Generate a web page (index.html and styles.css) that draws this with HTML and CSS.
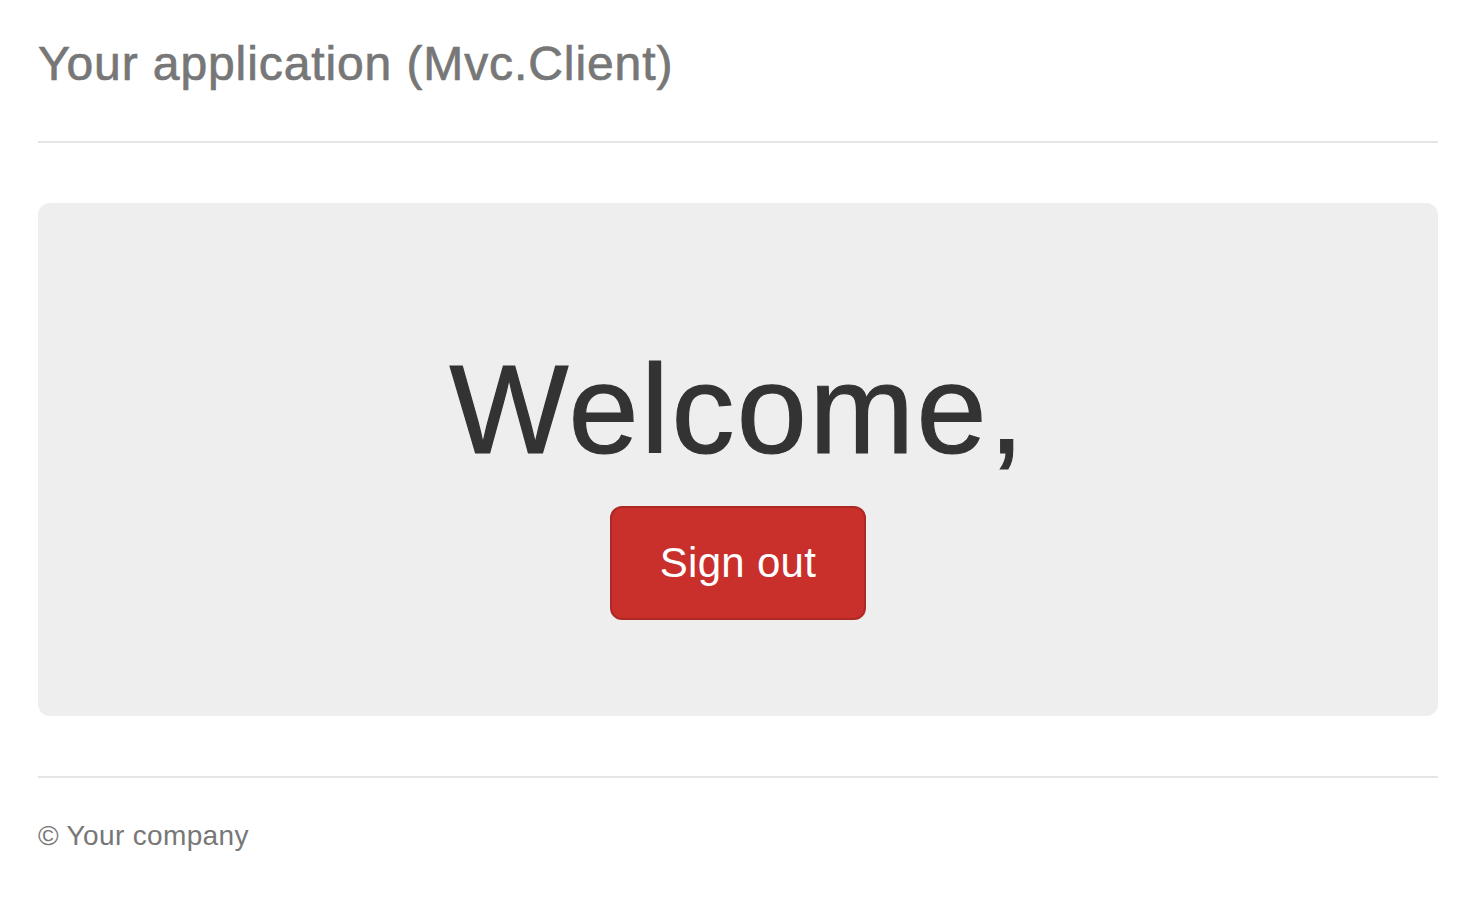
FILE: index.html
```html
<!DOCTYPE html>
<html lang="en">
<head>
<meta charset="utf-8">
<title>Mvc.Client</title>
<link rel="stylesheet" href="styles.css">
</head>
<body>
<div class="container">
  <div class="header">
    <h3 class="brand">Your application (Mvc.Client)</h3>
  </div>
  <div class="jumbotron">
    <h1 class="welcome">Welcome,</h1>
    <button class="btn-signout" type="button">Sign out</button>
  </div>
  <footer class="footer">
    <p class="copy">© Your company</p>
  </footer>
</div>
</body>
</html>
```

FILE: styles.css
```css
html, body {
  margin: 0;
  padding: 0;
  background: #fff;
}
body {
  font-family: "Liberation Sans", Arial, Helvetica, sans-serif;
  color: #333;
}
.container {
  padding: 24px 42px 0 38px;
}
.header {
  padding-bottom: 37px;
  border-bottom: 2px solid #e5e5e5;
}
.brand {
  margin: 0;
  font-size: 48px;
  line-height: 80px;
  font-weight: normal;
  letter-spacing: 0.9px;
  -webkit-text-stroke: 0.7px #777;
  color: #777;
}
.jumbotron {
  margin-top: 60px;
  background: #eee;
  border-radius: 12px;
  padding: 138px 0 96px;
  display: flex;
  flex-direction: column;
  align-items: center;
}
.welcome {
  margin: 0;
  font-size: 126px;
  line-height: 1.1;
  font-weight: normal;
  letter-spacing: 2.4px;
  -webkit-text-stroke: 1.2px #333;
  color: #333;
}
.btn-signout {
  margin-top: 26px;
  font-family: inherit;
  font-size: 42px;
  line-height: 56px;
  padding: 27px 48px;
  letter-spacing: 0.3px;
  color: #fff;
  background: #c9302c;
  border: 2px solid #ac2925;
  border-radius: 12px;
}
.footer {
  margin-top: 60px;
  border-top: 2px solid #e5e5e5;
  padding-top: 38px;
}
.copy {
  margin: 0;
  font-size: 28px;
  line-height: 40px;
  letter-spacing: 0.35px;
  color: #777;
}
```
